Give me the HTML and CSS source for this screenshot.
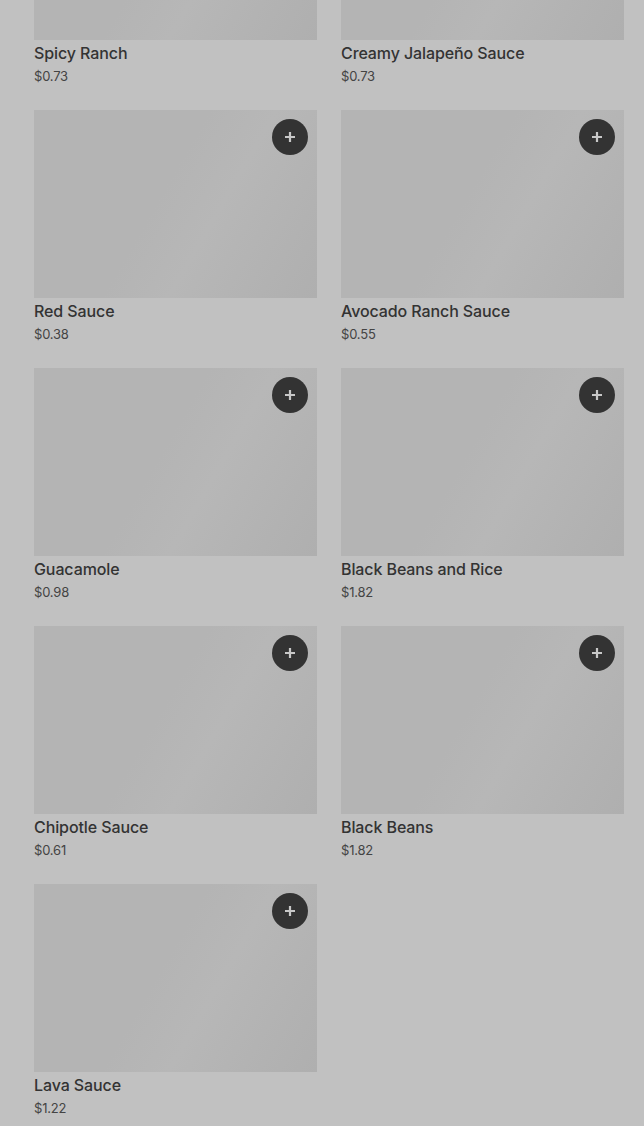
FILE: index.html
```html
<!DOCTYPE html>
<html>
<head>
<meta charset="utf-8">
<link rel="stylesheet" href="styles.css">
</head>
<body>
<div class="grid">
  <div class="card"><div class="img"><button class="add"><svg viewBox="0 0 16 16"><path d="M8 3v10M3 8h10"/></svg></button></div><div class="name">Spicy Ranch</div><div class="price">$0.73</div></div>
  <div class="card"><div class="img"><button class="add"><svg viewBox="0 0 16 16"><path d="M8 3v10M3 8h10"/></svg></button></div><div class="name">Creamy Jalapeño Sauce</div><div class="price">$0.73</div></div>
  <div class="card"><div class="img"><button class="add"><svg viewBox="0 0 16 16"><path d="M8 3v10M3 8h10"/></svg></button></div><div class="name">Red Sauce</div><div class="price">$0.38</div></div>
  <div class="card"><div class="img"><button class="add"><svg viewBox="0 0 16 16"><path d="M8 3v10M3 8h10"/></svg></button></div><div class="name">Avocado Ranch Sauce</div><div class="price">$0.55</div></div>
  <div class="card"><div class="img"><button class="add"><svg viewBox="0 0 16 16"><path d="M8 3v10M3 8h10"/></svg></button></div><div class="name">Guacamole</div><div class="price">$0.98</div></div>
  <div class="card"><div class="img"><button class="add"><svg viewBox="0 0 16 16"><path d="M8 3v10M3 8h10"/></svg></button></div><div class="name">Black Beans and Rice</div><div class="price">$1.82</div></div>
  <div class="card"><div class="img"><button class="add"><svg viewBox="0 0 16 16"><path d="M8 3v10M3 8h10"/></svg></button></div><div class="name">Chipotle Sauce</div><div class="price">$0.61</div></div>
  <div class="card"><div class="img"><button class="add"><svg viewBox="0 0 16 16"><path d="M8 3v10M3 8h10"/></svg></button></div><div class="name">Black Beans</div><div class="price">$1.82</div></div>
  <div class="card"><div class="img"><button class="add"><svg viewBox="0 0 16 16"><path d="M8 3v10M3 8h10"/></svg></button></div><div class="name">Lava Sauce</div><div class="price">$1.22</div></div>
</div>
</body>
</html>
```
FILE: styles.css
```css
html, body {
  margin: 0;
  padding: 0;
  background: #c1c1c1;
  overflow: hidden;
  height: 1126px;
}
body {
  font-family: Inter, "Noto Sans", sans-serif;
  color: #333;
}
.grid {
  display: grid;
  grid-template-columns: 283px 283px;
  column-gap: 24px;
  row-gap: 24px;
  padding-left: 34px;
  margin-top: -148px;
}
.card {
  display: flex;
  flex-direction: column;
}
.img {
  position: relative;
  height: 188px;
  background: linear-gradient(120deg, #b4b4b4 0%, #b4b4b4 45%, #b7b7b7 62%, #b2b2b2 85%, #afafaf 100%);
}
.add {
  position: absolute;
  top: 9px;
  right: 9px;
  width: 36px;
  height: 36px;
  border-radius: 50%;
  border: 0;
  padding: 0;
  background: #333;
  display: flex;
  align-items: center;
  justify-content: center;
}
.add svg {
  width: 16px;
  height: 16px;
  stroke: #c8c8c8;
  stroke-width: 2.2;
  fill: none;
}
.name {
  padding-top: 1px;
  font-size: 16px;
  font-weight: 500;
  line-height: 24px;
  color: #333;
  letter-spacing: -0.1px;
}
.price {
  margin-top: 1px;
  font-size: 13px;
  line-height: 20px;
  color: #444;
  letter-spacing: -0.2px;
}
```
